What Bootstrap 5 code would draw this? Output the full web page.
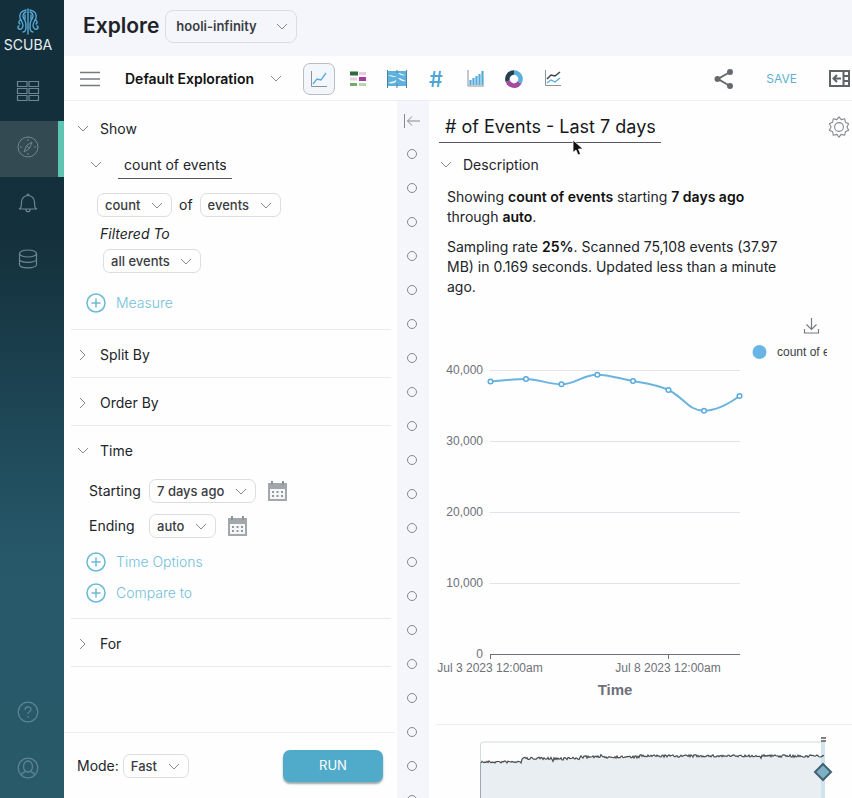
<!DOCTYPE html>
<html lang="en">
<head>
<meta charset="utf-8">
<meta name="viewport" content="width=device-width, initial-scale=1">
<title>Explore</title>
<link href="https://cdn.jsdelivr.net/npm/bootstrap@5.3.0/dist/css/bootstrap.min.css" rel="stylesheet">
<style>
body{font-family:Inter,"Liberation Sans",sans-serif;font-size:14px;line-height:20px;color:#222428;background:#fdfefd}
svg{display:block;fill:none;flex-shrink:0}
button svg,a svg{pointer-events:none}
.side{width:64px;background:linear-gradient(#132f3b 0,#14303c 30%,#26586a 70%,#285a69 100%)}
.brand{height:65px;padding:8px 8px 0 0;color:#e8eef1;font-size:14px;line-height:18px;text-decoration:none}
.side-item{height:56px;padding:0 8px 4px 0;color:#6f8791}
.side-item.on{background:#344a53;box-shadow:inset -6px 0 #5cc4b1}
.side-low .side-item{color:#5d8494}
.topbar{height:56px;background:#f4f6fb;padding:0 0 4px 19px;gap:6px}
.topbar h1{font-size:21px;font-weight:600;line-height:32px;color:#202227}
.tools{height:45px;border-bottom:1px solid #eeeff5;padding:1px 2px 0 16px}
.plain{background:none;border:0;padding:0;color:inherit}
.view{width:32px;height:32px;border-radius:7px}
.view.on{border:1px solid #b9bdc4;background:#f3f7fb}
.views{gap:7px;margin-left:21px}
.save{color:#5fb0cf;font-size:12px;line-height:20px}
.title-b{font-weight:600;color:#111}
.pick{appearance:none;width:auto;height:24px;border:1px solid #dcdde2;border-radius:7px;color:#3b3d42;font-weight:500;font-size:13px;line-height:20px;padding:0 30px 1px 7px;background:#fdfefd url("data:image/svg+xml,%3Csvg xmlns='http://www.w3.org/2000/svg' width='12' height='7'%3E%3Cpath d='M1 1l5 5 5-5' fill='none' stroke='%23858990'/%3E%3C/svg%3E") no-repeat right 8px center}
.pick-lg{height:33px;border-radius:8px;width:132px;padding-left:10px;background-color:transparent;font-weight:600}
.query{width:333px}
.sect{margin:0 6px 0 7px;border-bottom:1px solid #e9eaec}
.sect-first{padding:3px 0 16px}
.sect-head{height:47px;padding-left:6px;gap:11px;padding-top:2px}
.name-in{border:0;border-bottom:1px solid #55585e;background:none;color:#222428;border-radius:0}
.row-name{padding-left:19px}
.measure-name{width:114px;height:28px;padding:0 6px}
.row-agg{padding:14px 0 0 26px;gap:7px}
.filt{padding:7px 0 5px 29px}
.row-filt{padding-left:32px}
.row-time{padding:6px 0 5px 18px}
.add{color:#74c0db;gap:10px;margin-left:15px;font-weight:300}
.opts{gap:11px;padding:9px 0 15px}
.lab{width:60px}
.run{width:100px;height:32px;border-radius:7px;background:#50abca;color:#fff;font-size:13px;box-shadow:0 2px 2px #9aa9b0}
.run:hover{background:#459fbe;color:#fff}
.foot{height:66px;border-top:1px solid #ebecee;padding:1px 12px 0 13px;margin-right:2px}
.rail{width:32px;background:#f4f6fb;color:#8b8e94;padding-right:2px}
.rail-top{height:20px;margin:12px 0 18px}
.dots{gap:24px;padding-top:2px}
.dots li button{width:10px;height:10px;border:1px solid #85888e;border-radius:50%;display:block;padding:0;background:none}
.result{min-width:0}
.result-head{padding:10px 2px 0 10px}
.chart-title{width:222px;height:32px;font-size:18px;padding:0 6px;color:#17181b}
.pointer{left:133px;top:28px}
.toggle{gap:11px;padding:12px 0 0 11px}
.desc{padding:12px 60px 0 18px}
.desc p{margin-bottom:10px}
.desc b{font-weight:600;color:#111}
.axis{font-family:"Liberation Sans",Arial,sans-serif;font-size:12px;fill:#6e7079}
.axis-title{font-size:15px}
.legend-text{fill:#3b3d42}
.rule{border-top:1px solid #eceded;margin-left:7px}
</style>
<script src="https://cdn.jsdelivr.net/npm/bootstrap@5.3.0/dist/js/bootstrap.bundle.min.js"></script>
</head>
<body class="d-flex vh-100 overflow-hidden">
<nav class="side d-flex flex-column flex-shrink-0" aria-label="Main">
  <a href="#" class="brand d-flex flex-column align-items-center">
    <svg width="24" height="28" viewBox="0 0 24 28" stroke="#56a9d6" stroke-width="1.4" stroke-linecap="round"><path d="M12 1v25M10 2C5 3 3 6 4 10c1 3 3 4 3 8M14 2c5 1 7 4 6 8-1 3-3 4-3 8M10 4C7 5 6 8 8 11c2 2 2 5 2 8s-1 5-3 5M14 4c3 1 4 4 2 7-2 2-2 5-2 8s1 5 3 5M7 17c0 3-2 5-4 4s-1-3 0-3M17 17c0 3 2 5 4 4s1-3 0-3"/><path d="M9 7v4M15 7v4M5 12c-2 0-3 3-1 4M19 12c2 0 3 3 1 4"/></svg>
    <span>SCUBA</span>
  </a>
  <a href="#" class="side-item d-flex align-items-center justify-content-center" aria-label="Boards"><svg width="24" height="22" viewBox="0 0 24 22" stroke="currentColor" stroke-width="1.2"><path d="M1.500 1.500h9.500v5h-9.500zM13 1.500h9.500v5h-9.500zM1.500 8.500h9.500v5h-9.500zM13 8.500h9.500v5h-9.500zM1.500 15.500h9.500v5h-9.500zM13 15.500h9.500v5h-9.500z"/></svg></a>
  <a href="#" class="side-item on d-flex align-items-center justify-content-center" aria-label="Explore"><svg width="22" height="22" viewBox="0 0 22 22" stroke="currentColor"><circle cx="11" cy="11" r="10"/><path d="M15 6l-2.500 6.500L7 16l2.500-6.500zM11 3v2M11 17v2M3 11h2M17 11h2M9.500 9.500l3 3"/></svg></a>
  <a href="#" class="side-item d-flex align-items-center justify-content-center" aria-label="Alerts"><svg width="20" height="20" viewBox="0 0 20 20" stroke="currentColor" stroke-width="1.200"><path d="M1 16c2-1 2.500-2 2.500-7a6.500 6.500 0 0 1 13 0c0 5 .5 6 2.500 7zM8 16.500c0 3 4 3 4 0M9 2.500c0-2 2-2 2 0"/></svg></a>
  <a href="#" class="side-item d-flex align-items-center justify-content-center" aria-label="Data"><svg width="20" height="20" viewBox="0 0 20 20" stroke="currentColor" stroke-width="1.200"><ellipse cx="10" cy="4.500" rx="8.500" ry="3.500"/><path d="M1.500 4.500v11c0 4.500 17 4.500 17 0v-11M1.500 10c0 4.500 17 4.500 17 0"/></svg></a>
  <div class="side-low mt-auto">
    <a href="#" class="side-item d-flex align-items-center justify-content-center" aria-label="Help"><svg width="22" height="22" viewBox="0 0 22 22" stroke="currentColor" stroke-width="1.300"><circle cx="11" cy="11" r="9.800"/><path d="M8 9c0-4 6-4 6-.5 0 2.500-3 2-3 4.500M11 15v1.500"/></svg></a>
    <a href="#" class="side-item d-flex align-items-center justify-content-center" aria-label="Account"><svg width="22" height="22" viewBox="0 0 22 22" stroke="currentColor" stroke-width="1.300"><circle cx="11" cy="11" r="9.800"/><path d="M4 17.500c1-2 3-2 4.500-3M18 17.500c-1-2-3-2-4.500-3"/><ellipse cx="11" cy="9.500" rx="4.500" ry="5.500"/></svg></a>
  </div>
</nav>
<div class="d-flex flex-column flex-fill result">
  <header class="topbar d-flex align-items-center flex-shrink-0">
    <h1 class="mb-0">Explore</h1>
    <select class="pick pick-lg" aria-label="Dataset"><option>hooli-infinity</option></select>
  </header>
  <div class="tools d-flex align-items-center flex-shrink-0">
    <button class="plain me-4" aria-label="Menu"><svg width="21" height="16" stroke="#777b80" stroke-width="1.500"><path d="M0 1.500h20M0 8h20M0 14.500h20"/></svg></button>
    <button class="plain title-b d-flex align-items-center text-nowrap">Default Exploration<svg class="ms-3" width="12" height="8" stroke="#858990"><path d="M1 1l5 5 5-5"/></svg></button>
    <div class="views d-flex" role="group" aria-label="View type">
      <button class="plain view on d-flex align-items-center justify-content-center" aria-label="Line"><svg width="18" height="18"><path d="M1.500 1v15.500H17" stroke="#8d9298"/><path d="M3 14l4-5 4 1 5-7" stroke="#58acd8" stroke-width="1.300"/></svg></button>
      <button class="plain view d-flex align-items-center justify-content-center" aria-label="Table"><svg width="17" height="16"><path d="M0 2.500h8" stroke="#2e6b3c" stroke-width="4"/><path d="M9 2.500h7" stroke="#ecc9e2" stroke-width="3"/><path d="M0 8h7" stroke="#e6cfe0" stroke-width="3"/><path d="M9 8h7" stroke="#a93a9b" stroke-width="4"/><path d="M0 13.500h7" stroke="#74ad6b" stroke-width="3"/><path d="M9 13.500h7" stroke="#b7d6ac" stroke-width="3"/></svg></button>
      <button class="plain view d-flex align-items-center justify-content-center" aria-label="Sankey"><svg width="22" height="18"><path d="M1 1h20v15H1z" fill="#5fb0dc"/><path d="M2 5c4 0 6 1 9 2-3 0-6 0-9-2zM12 3c3 0 5 2 8 2-3 1-6 0-8-2zM2 13c4-2 6-1 8-3 1 3-4 4-8 3zM12 8c3 0 5 2 8 3-4 1-6-1-8-3z" fill="#e9f5fb"/><path d="M1.500 0v18M11 0v3M11 14v4M20.500 0v18" stroke="#4a83a6"/></svg></button>
      <button class="plain view d-flex align-items-center justify-content-center" aria-label="Number"><svg width="14" height="16" stroke="#4ea5d6" stroke-width="2"><path d="M5.500 0l-2 16M11 0l-2 16M1.500 5h12M.5 11h12"/></svg></button>
      <button class="plain view d-flex align-items-center justify-content-center" aria-label="Bar"><svg width="17" height="17"><path d="M1 0v16h16" stroke="#8d9298"/><path d="M3.500 15v-5M6.500 15V8M9.500 15V6M12.500 15V4M15.500 15V1" stroke="#55aad8" stroke-width="2.200"/></svg></button>
      <button class="plain view d-flex align-items-center justify-content-center" aria-label="Pie"><svg width="18" height="18" stroke-width="4.500"><path d="M9 2.500a6.500 6.500 0 0 1 5.500 10" stroke="#5ab0dc"/><path d="M14.500 12.500a6.500 6.500 0 0 1-11.800-1.500" stroke="#a34ba0"/><path d="M2.700 11A6.500 6.500 0 0 1 9 2.500" stroke="#243f52"/></svg></button>
      <button class="plain view d-flex align-items-center justify-content-center" aria-label="Multi line"><svg width="18" height="17"><path d="M1.500 0v15.500H17" stroke="#8d9298"/><path d="M3 9l4-4 4 1 5-4" stroke="#3c4249" stroke-width="1.500"/><path d="M3 13l4-3 4 2 5-4" stroke="#58acd8" stroke-width="1.300"/></svg></button>
    </div>
    <button class="plain ms-auto" aria-label="Share"><svg width="20" height="20" viewBox="0 0 20 20"><path d="M16 3L4 10l12 7" stroke="#66696e" stroke-width="2"/><g fill="#66696e"><circle cx="16" cy="3" r="3"/><circle cx="3.500" cy="10" r="3"/><circle cx="16" cy="17" r="3"/></g></svg></button>
    <button class="plain save mx-4 px-2">SAVE</button>
    <button class="plain" aria-label="Collapse panel"><svg width="21" height="17" stroke="#5f6267" stroke-width="2"><path d="M1 1h19v15H1zM14.500 1v15M14.500 6H20M14.500 11H20"/><path d="M12 8.500H5M8 5L4.500 8.500 8 12"/></svg></button>
  </div>
  <div class="d-flex flex-fill overflow-hidden">
    <form class="query d-flex flex-column flex-shrink-0" onsubmit="return false">
      <section class="sect sect-first">
        <div class="sect-head d-flex align-items-center"><svg width="12" height="8" stroke="#858990"><path d="M1 1l5 5 5-5"/></svg>Show</div>
        <div class="row-name d-flex align-items-center"><svg width="12" height="8" stroke="#858990"><path d="M1 1l5 5 5-5"/></svg><input class="name-in measure-name ms-3" value="count of events" aria-label="Measure name"></div>
        <div class="row-agg d-flex align-items-center"><select class="pick" aria-label="Aggregate"><option>count</option></select><span>of</span><select class="pick" aria-label="Subject"><option>events</option></select></div>
        <label class="filt fst-italic d-block" for="filter">Filtered To</label>
        <div class="row-filt d-flex"><select class="pick" id="filter"><option>all events</option></select></div>
        <button type="button" class="plain add d-flex align-items-center mt-3 pt-1"><svg width="20" height="20" stroke="#69b9d8" stroke-width="1.500"><circle cx="10" cy="10" r="9"/><path d="M10 5.500v9M5.500 10h9"/></svg>Measure</button>
      </section>
      <section class="sect"><div class="sect-head d-flex align-items-center"><svg width="12" height="12" stroke="#858990"><path d="M3 1l5 5-5 5"/></svg>Split By</div></section>
      <section class="sect"><div class="sect-head d-flex align-items-center"><svg width="12" height="12" stroke="#858990"><path d="M3 1l5 5-5 5"/></svg>Order By</div></section>
      <section class="sect">
        <div class="sect-head d-flex align-items-center"><svg width="12" height="8" stroke="#858990"><path d="M1 1l5 5 5-5"/></svg>Time</div>
        <div class="row-time d-flex align-items-center"><label class="lab" for="from">Starting</label><select class="pick" id="from"><option>7 days ago</option></select><button type="button" class="plain ms-2 ps-1" aria-label="Pick start"><svg width="19" height="20"><path d="M0 2h19v18H0z" fill="#a2a7ac"/><path d="M2 8h15v10H2z" fill="#f5f6f6"/><path d="M4 11h11M4 15h11" stroke="#92979d" stroke-width="2" stroke-dasharray="2 2.500"/><path d="M4 0v4M15 0v4" stroke="#8e9399" stroke-width="2"/></svg></button></div>
        <div class="row-time d-flex align-items-center"><label class="lab" for="to">Ending</label><select class="pick" id="to"><option>auto</option></select><button type="button" class="plain ms-2 ps-1" aria-label="Pick end"><svg width="19" height="20"><path d="M0 2h19v18H0z" fill="#a2a7ac"/><path d="M2 8h15v10H2z" fill="#f5f6f6"/><path d="M4 11h11M4 15h11" stroke="#92979d" stroke-width="2" stroke-dasharray="2 2.500"/><path d="M4 0v4M15 0v4" stroke="#8e9399" stroke-width="2"/></svg></button></div>
        <div class="opts d-flex flex-column align-items-start">
        <button type="button" class="plain add d-flex align-items-center"><svg width="20" height="20" stroke="#69b9d8" stroke-width="1.500"><circle cx="10" cy="10" r="9"/><path d="M10 5.500v9M5.500 10h9"/></svg>Time Options</button>
        <button type="button" class="plain add d-flex align-items-center"><svg width="20" height="20" stroke="#69b9d8" stroke-width="1.500"><circle cx="10" cy="10" r="9"/><path d="M10 5.500v9M5.500 10h9"/></svg>Compare to</button>
        </div>
      </section>
      <section class="sect"><div class="sect-head d-flex align-items-center"><svg width="12" height="12" stroke="#858990"><path d="M3 1l5 5-5 5"/></svg>For</div></section>
      <div class="foot d-flex align-items-center mt-auto"><label for="mode" class="me-1">Mode:</label><select class="pick" id="mode"><option>Fast</option></select><button class="btn run ms-auto p-0">RUN</button></div>
    </form>
    <div class="rail d-flex flex-column align-items-center flex-shrink-0 overflow-hidden">
      <button class="plain rail-top" aria-label="Collapse query"><svg width="18" height="16" stroke="#85888e"><path d="M1.500 1v14M17 8H4.500M9 3.500L4.500 8 9 12.500"/></svg></button>
      <ul class="dots list-unstyled d-flex flex-column mb-0" id="dots"></ul>
    </div>
    <main class="flex-fill result">
      <div class="result-head d-flex align-items-center">
        <div class="position-relative"><input class="name-in chart-title" value="# of Events - Last 7 days" aria-label="Chart title">
          <svg class="pointer position-absolute" width="12" height="18"><path d="M1 1v12.500l3-2.500 2 5 2.500-1-2-5H11z" fill="#111" stroke="#fff" stroke-width=".8"/></svg></div>
        <button class="plain ms-auto" aria-label="Settings"><svg width="22" height="22" viewBox="0 0 20 20" stroke="#85898e"><circle cx="10" cy="10" r="4"/><path d="M10 .8l2 2.500 3.200-.8.6 3.200 3 1.400L17.200 10l1.600 2.900-3 1.400-.6 3.200-3.200-.8-2 2.500-2-2.500-3.200.8-.6-3.200-3-1.400L2.800 10 1.200 7.100l3-1.400.6-3.200 3.200.8z" stroke-linejoin="round"/></svg></button>
      </div>
      <button class="plain toggle d-flex align-items-center"><svg width="12" height="8" stroke="#858990"><path d="M1 1l5 5 5-5"/></svg>Description</button>
      <div class="desc">
        <p>Showing <b>count of events</b> starting <b>7 days ago</b> through <b>auto</b>.</p>
        <p>Sampling rate <b>25%</b>. Scanned 75,108 events (37.97 MB) in 0.169 seconds. Updated less than a minute ago.</p>
      </div>
      <svg class="w-100 h-auto" viewBox="429 307 423 417" role="img" aria-label="Events per day">
        <path d="M490 370.500h250M490 441.500h250M490 512.500h250M490 583.500h250" stroke="#e0e3ea"/>
        <path d="M490.500 659v-4.500M668.500 659v-4.500M490 654.500h250" stroke="#6e7079"/>
        <g class="axis" text-anchor="end"><text x="483" y="374">40,000</text><text x="483" y="445">30,000</text><text x="483" y="516">20,000</text><text x="483" y="587">10,000</text><text x="483" y="658">0</text></g>
        <g class="axis" text-anchor="middle"><text x="490" y="672">Jul 3 2023 12:00am</text><text x="668" y="672">Jul 8 2023 12:00am</text><text class="axis-title" x="615" y="695" font-weight="700">Time</text></g>
        <path d="M490.500 381.500C502 380.500 514 379 526 379c12 0 23 5.300 35.500 5.300 14 0 21-9.600 35.800-9.600 12 0 22 4 35.700 6.300 14 2.300 24 3.500 35.500 9 16 8 20 20.700 35.500 20.700 12 0 25-7 35.500-14.700" stroke="#6bb4df" stroke-width="2"/>
        <g fill="#fff" stroke="#5aabdc" stroke-width="1.500"><circle cx="490.500" cy="381.500" r="2.300"/><circle cx="526" cy="379" r="2.300"/><circle cx="561.500" cy="384.300" r="2.300"/><circle cx="597.300" cy="374.700" r="2.300"/><circle cx="633" cy="381" r="2.300"/><circle cx="668.500" cy="390" r="2.300"/><circle cx="704" cy="410.700" r="2.300"/><circle cx="739.500" cy="396" r="2.300"/></g>
        <path d="M811.500 318v11M806.500 324.500l5 5 5-5M804.500 329v4h14v-4" stroke="#777a7f" stroke-width="1.200"/>
        <circle cx="759.500" cy="352" r="7" fill="#68b5e6"/>
        <svg x="777" y="340" width="50" height="24"><text class="axis legend-text" x="0" y="16">count of events</text></svg>
      </svg>
      <div class="rule"></div>
      <svg class="w-100 h-auto" viewBox="429 725 423 110" role="img" aria-label="Time range">
        <path id="area" fill="#e8eef1"/>
        <path d="M480.500 835v-90q0-3 3-3H824" stroke="#d3dadd"/>
        <path d="M821 742h4v93h-4z" fill="#cfe5ed"/>
        <path id="line" stroke="#4a4d50" stroke-width="1.200"/>
        <path d="M480.500 762v73" stroke="#9fa8ac"/>
        <path d="M821 738h5M821 741h5" stroke="#555" stroke-width="1.500"/>
        <path d="M823 764l8 8-8 8-8-8z" fill="#7fb0c4" stroke="#3f6373" stroke-width="2"/>
      </svg>
    </main>
  </div>
</div>
<script>
document.getElementById('dots').innerHTML = Array.from({length: 20}, (_, i) => '<li><button aria-label="Step ' + (i + 1) + '"></button></li>').join('');
let seed = 7;
const rnd = () => (seed = (seed * 16807) % 2147483647) / 2147483647;
let d = '';
for (let x = 481; x <= 824; x++) {
  const base = x < 522 ? 762 : x < 580 ? 758.5 : x < 640 ? 757 : 756;
  const spike = rnd() > .96 ? (rnd() - .5) * 5 : 0;
  d += (d ? 'L' : 'M') + x + ' ' + (base + (rnd() - .5) * 2.4 + spike).toFixed(1);
}
document.getElementById('line').setAttribute('d', d);
document.getElementById('area').setAttribute('d', d + 'V835H481Z');
</script>
</body>
</html>
